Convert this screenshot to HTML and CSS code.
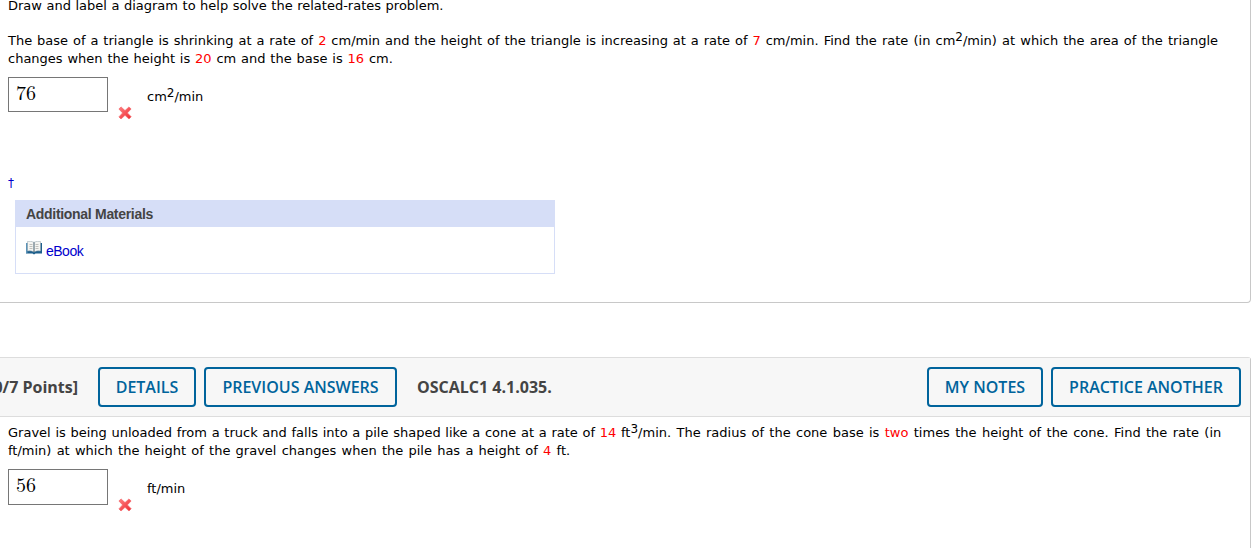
FILE: index.html
```
<!DOCTYPE html>

<html lang="en-us">
	<head>
		<meta charset="utf-8">
		<title>Homework</title>
		<link rel="stylesheet" href="styles.css">
	</head>
	<body>
		<svg class="defs" width="0" height="0">
			<linearGradient id="red" x1="0" y1="0" x2="1" y2="1">
				<stop offset="0" stop-color="#ff8080"/>
				<stop offset="1" stop-color="#ee2a32"/>
			</linearGradient>
			<symbol id="wrong" viewBox="0 0 14 14">
				<path d="M3 .9 L7 4.6 L11 .9 L13.1 3 L9.4 6.9 L13.2 10.8 L11 13 L7 9.3 L3 13 L.9 10.9 L4.6 6.9 L.9 3 Z" fill="url(#red)" stroke="#f2666a" stroke-width=".7" stroke-linejoin="round"/>
			</symbol>
		</svg>

		<section class="question first">
			<p class="intro">Draw and label a diagram to help solve the related-rates problem.</p>
			<p class="problem"><span class="line l1">The base of a triangle is shrinking at a rate of <b>2</b> cm/min and the height of the triangle is increasing at a rate of <b>7</b> <span class="wide">cm/min. Find the rate (in cm<sup>2</sup>/min) at which the area of the triangle</span></span>
			<span class="line l2">changes when the height is <b>20</b> cm and the base is <b>16</b> cm.</span></p>
			<div class="answer">
				<div class="box">76</div>
				<svg class="wrong" width="14" height="14"><use href="#wrong"/></svg>
				<span class="unit">cm<sup>2</sup>/min</span>
			</div>
			<div class="dagger">†</div>
			<div class="materials">
				<header>Additional Materials</header>
				<div class="links">
					<svg class="book" width="16" height="14" viewBox="0 0 16 14">
						<path d="M0 2 H16 V12.5 H9.5 L8 13.5 L6.5 12.5 H0 Z" fill="#1d5f8c"/>
						<path d="M0 2 H1.5 V12 H0 Z" fill="#5b93b8"/>
						<path d="M1.5 .5 Q5 -.3 8 1.3 Q11 -.3 14.5 .5 V10 Q11 9.3 8 11 Q5 9.3 1.5 10 Z" fill="#f5f5f2" stroke="#91a3ac" stroke-width=".5"/>
						<path d="M8 1.3 V11" stroke="#526a78" stroke-width="1.1"/>
						<path d="M3.5 3.5 H6.5 M3.5 5.5 H6.5 M3.5 7.5 H6.5 M9.5 3.5 H12.5 M9.5 5.5 H12.5 M9.5 7.5 H12.5" stroke="#c0c0bc" stroke-width="1"/>
					</svg>
					<a href="#">eBook</a>
				</div>
			</div>
		</section>

		<section class="question second">
			<header class="bar">
				<div class="points"><span>0/7 Points]</span></div>
				<button class="details">DETAILS</button>
				<button class="previous">PREVIOUS ANSWERS</button>
				<strong>OSCALC1 4.1.035.</strong>
				<button class="notes">MY NOTES</button>
				<button class="practice">PRACTICE ANOTHER</button>
			</header>
			<p class="problem"><span class="line l3">Gravel is being unloaded from a truck and falls into a pile shaped like a cone at a rate of <b>14</b> <span class="wide">ft<sup>3</sup>/min. The radius of the cone base is <b>two</b> times the height of the cone. Find the rate (in</span></span>
			<span class="line l4">ft/min) at which the height of the gravel changes when the pile has a height of <b>4</b> ft.</span></p>
			<div class="answer">
				<div class="box tall">56</div>
				<svg class="wrong" width="14" height="14"><use href="#wrong"/></svg>
				<span class="unit">ft/min</span>
			</div>
		</section>
	</body>
</html>
```
FILE: styles.css
```
* { box-sizing: border-box; }
html { overflow: hidden; }
body {
	margin: 0;
	height: 548px;
	overflow: hidden;
	background: #fff;
	color: #000;
	font: 13px/18px Verdana, "DejaVu Sans", sans-serif;
}
p { margin: 0; }
.defs { display: block; }

.question { width: 1251px; border-right: 1px solid #c8c8c8; }
.first {
	height: 303px;
	border-bottom: 1px solid #c8c8c8;
	border-bottom-right-radius: 4px;
}
.intro { margin: 0 0 0 8px; height: 32px; line-height: 12px; white-space: nowrap; word-spacing: .4px; }
.problem { padding-left: 8px; }
.line { display: block; height: 18px; white-space: nowrap; }
.l1 { word-spacing: .79px; }
.l1 .wide { word-spacing: 1px; }
.l2 { word-spacing: .7px; }
.l3 { word-spacing: .56px; }
.l3 .wide { word-spacing: 1.2px; }
.l4 { word-spacing: 1.1px; }
.problem b { font-weight: normal; color: #f00; }
sup { font-size: 12px; line-height: 0; vertical-align: 4px; }

.answer { display: flex; height: 46px; margin: 9px 0 0 8px; }
.box {
	width: 100px;
	height: 35px;
	padding-left: 7px;
	border: 1px solid #767676;
	font: 20px/32px "Latin Modern Math", "Liberation Serif", serif;
}
.tall { height: 36px; line-height: 33px; }
.wrong { margin: 29px 0 0 10px; }
.unit { margin: 11px 0 0 15px; }

.dagger { margin: 51px 0 0 8px; height: 26px; color: #00c; font-size: 12px; }
.materials { width: 540px; height: 74px; margin-left: 15px; border: 1px solid #d6def7; }
.materials header {
	height: 26px;
	padding-left: 10px;
	background: #d6def7;
	color: #444;
	font: bold 14px/27px "Liberation Sans", Arial, sans-serif;
	letter-spacing: -.3px;
}
.links { display: flex; padding: 14px 0 0 10px; font: 14px/20px "Liberation Sans", Arial, sans-serif; }
.links a { margin-left: 4px; color: #00c; text-decoration: none; letter-spacing: -.5px; }

.second { height: 191px; margin-top: 54px; border-top: 1px solid #ddd; border-top-right-radius: 3px; }
.bar {
	display: flex;
	align-items: center;
	height: 59px;
	padding-right: 9px;
	border-bottom: 1px solid #ddd;
	background: #f7f7f7;
	color: #444;
	font: bold 16px/22px "Open Sans", sans-serif;
}
.points { display: flex; justify-content: flex-end; width: 78px; margin-right: 20px; white-space: nowrap; overflow: hidden; }
.bar button {
	height: 40px;
	padding: 0;
	margin-right: 8px;
	border: 2px solid #00649c;
	border-radius: 4px;
	background: none;
	color: #00649c;
	font: 600 16px/22px "Open Sans", sans-serif;
}
.bar .details { width: 98px; }
.bar .previous { width: 193px; }
.bar strong { margin: 0 auto 0 12px; font-weight: bold; }
.bar .notes { width: 116px; }
.bar .practice { width: 190px; margin-right: 0; }
.second .problem { padding-top: 7px; }
```
